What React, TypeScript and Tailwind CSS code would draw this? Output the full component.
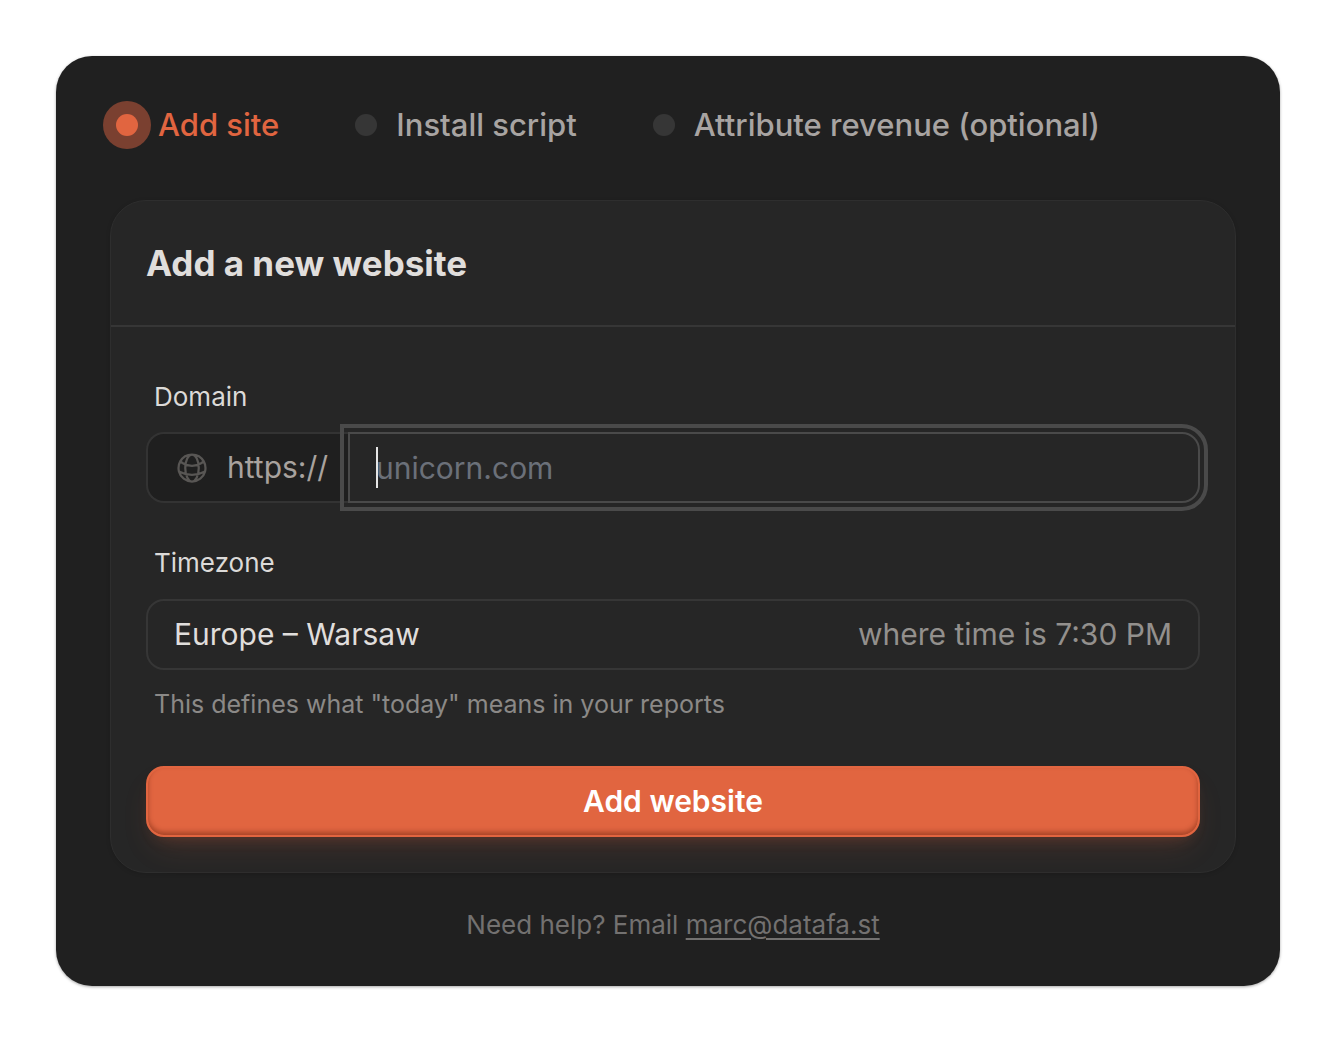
import { useState } from "react"

const STEPS = ["Add site", "Install script", "Attribute revenue (optional)"]

function Step({ label, active }: { label: string; active: boolean }) {
  return (
    <li
      className={`flex items-center whitespace-nowrap text-[31px] leading-10 font-medium ${
        active ? "gap-[7px] text-[#e16540]" : "gap-[19px] text-[#a8a4a2]"
      }`}
      aria-current={active ? "step" : undefined}
    >
      {active ? (
        <span className="flex size-12 items-center justify-center rounded-full bg-[#7a4030]">
          <span className="size-[22px] rounded-full bg-[#e16540]" />
        </span>
      ) : (
        <span className="size-[22px] rounded-full bg-[#363636]" />
      )}
      {label}
    </li>
  )
}

function GlobeIcon() {
  return (
    <svg
      viewBox="0 0 24 24"
      fill="none"
      stroke="currentColor"
      strokeWidth="1.5"
      strokeLinecap="round"
      strokeLinejoin="round"
      className="size-9 text-[#585654]"
      aria-hidden="true"
    >
      <path d="M12 21a9.004 9.004 0 0 0 8.716-6.747M12 21a9.004 9.004 0 0 1-8.716-6.747M12 21c2.485 0 4.5-4.03 4.5-9S14.485 3 12 3m0 18c-2.485 0-4.5-4.03-4.5-9S9.515 3 12 3m0 0a8.997 8.997 0 0 1 7.843 4.582M12 3a8.997 8.997 0 0 0-7.843 4.582m15.686 0A11.953 11.953 0 0 1 12 10.5c-2.998 0-5.74-1.1-7.843-2.918m15.686 0A8.959 8.959 0 0 1 21 12c0 .778-.099 1.533-.284 2.253m0 0A17.919 17.919 0 0 1 12 16.5c-3.162 0-6.133-.815-8.716-2.247m0 0A9.015 9.015 0 0 1 3 12c0-1.605.42-3.113 1.157-4.418" />
    </svg>
  )
}

export default function App() {
  const [domain, setDomain] = useState("")

  return (
    <main className="bg-white p-14 font-['Inter','Liberation_Sans',sans-serif]">
      <div className="rounded-[36px] bg-[#202020] pt-[45px] pr-11 pb-[41px] pl-[47px] shadow-[0_1px_3px_rgba(0,0,0,0.35)]">
        {/* Progress */}
        <ol className="flex items-center gap-[76px]">
          {STEPS.map((label, i) => (
            <Step key={label} label={label} active={i === 0} />
          ))}
        </ol>

        <section className="mt-[51px] ml-[7px] rounded-[36px] border border-[#2e2e2e] bg-[#262626] shadow-[0_1px_4px_rgba(0,0,0,0.15)]">
          <h1 className="border-b-2 border-[#363636] px-[35px] pt-10 pb-10 text-[35px] leading-[44px] font-bold text-[#e0dedc]">
            Add a new website
          </h1>

          <form className="px-[35px] pt-[50px] pb-[35px]" onSubmit={(e) => e.preventDefault()}>
            <label htmlFor="domain" className="block px-2 text-[26px] leading-10 text-[#dcdad8]">
              Domain
            </label>
            <div className="mt-[15px] flex h-[71px]">
              <span className="flex w-[202px] items-center gap-[17px] rounded-l-[18px] border-2 border-r-0 border-[#333333] bg-[#1f1f1f] pl-[26px] text-[30px] text-[#a8a29e]">
                <GlobeIcon />
                https://
              </span>
              <div className="relative min-w-0 flex-1">
                <input
                  id="domain"
                  type="text"
                  placeholder="unicorn.com"
                  value={domain}
                  onChange={(e) => setDomain(e.target.value)}
                  className="size-full rounded-r-[18px] border-2 border-[#4a4a4a] bg-[#262626] px-[26px] text-[30px] text-[#dcdad8] caret-transparent outline-4 outline-offset-4 outline-[#4a4a4a] placeholder:text-[#6b7079]"
                />
                {/* Caret */}
                {domain === "" && <span className="pointer-events-none absolute top-[15px] left-7 h-[41px] w-0.5 bg-[#e5e5e5]" />}
              </div>
            </div>

            <label htmlFor="timezone" className="mt-10 block px-2 text-[26px] leading-10 text-[#dcdad8]">
              Timezone
            </label>
            <div className="mt-4 flex h-[71px] items-center justify-between rounded-[18px] border-2 border-[#363636] px-[26px] text-[30px]">
              <select id="timezone" className="min-w-0 flex-1 appearance-none bg-transparent text-[#e0dedc] outline-none">
                <option>Europe – Warsaw</option>
              </select>
              <span className="whitespace-nowrap text-[#93908d]">where time is 7:30 PM</span>
            </div>
            <p className="mt-[14px] px-2 text-[25px] leading-10 text-[#8b8987]">
              This defines what "today" means in your reports
            </p>

            <button
              type="submit"
              className="mt-[42px] h-[71px] w-full rounded-[18px] border-2 border-[#e16540] bg-[#e16540] text-[30px] font-semibold text-white shadow-[0_16px_32px_-8px_rgba(225,101,64,0.16),0_8px_16px_-8px_rgba(225,101,64,0.24),inset_0_-3px_5px_rgba(80,20,0,0.4)]"
            >
              Add website
            </button>
          </form>
        </section>

        <p className="mt-8 ml-[7px] text-center text-[26px] leading-10 text-[#737170]">
          Need help? Email{" "}
          <a href="mailto:marc@datafa.st" className="underline decoration-2 underline-offset-4">
            marc@datafa.st
          </a>
        </p>
      </div>
    </main>
  )
}
